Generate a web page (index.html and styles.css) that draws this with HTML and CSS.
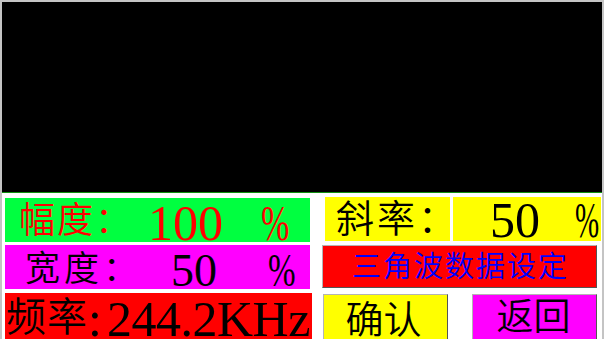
FILE: index.html
```html
<!DOCTYPE html>
<html lang="zh-CN">
<head>
<meta charset="utf-8">
<title>三角波数据设定</title>
<link rel="stylesheet" href="styles.css">
</head>
<body>
<div class="frame">
  <div class="screen"></div>
  <div class="panel">
    <div class="col-left">
      <div class="row amp">
        <span class="cjk lbl">幅度：</span>
        <span class="num val">100</span>
        <span class="num pct">%</span>
      </div>
      <div class="row wid">
        <span class="cjk lbl">宽度：</span>
        <span class="num val">50</span>
        <span class="num pct">%</span>
      </div>
      <div class="row freq">
        <span class="cjk lbl">频率</span>
        <span class="num colon">:</span>
        <span class="num val">244.2KHz</span>
      </div>
    </div>
    <div class="col-right">
      <div class="rrow">
        <div class="box slope-lbl"><span class="cjk lbl">斜率：</span></div>
        <div class="box slope-val">
          <span class="num val">50</span>
          <span class="num pct">%</span>
        </div>
      </div>
      <div class="btn title"><span class="cjk lbl">三角波数据设定</span></div>
      <div class="rrow bottom">
        <div class="btn ok"><span class="cjk lbl">确认</span></div>
        <div class="btn back"><span class="cjk lbl">返回</span></div>
      </div>
    </div>
  </div>
</div>
</body>
</html>
```
FILE: styles.css
```css
html, body {
  margin: 0;
  padding: 0;
  background: #ffffff;
}

.frame {
  box-sizing: border-box;
  width: 604px;
  height: 339px;
  border-top: 2px solid #c4c4c4;
  border-left: 2px solid #c4c4c4;
  border-right: 2px solid #c4c4c4;
  background: #ffffff;
}

.screen {
  height: 190px;
  background: #000000;
  border-bottom: 1px solid #119011;
}

.panel {
  display: flex;
  padding-top: 4px;
  padding-left: 3px;
}

.cjk {
  font-family: "Noto Sans CJK SC", sans-serif;
  font-weight: 350;
  line-height: 1;
  white-space: nowrap;
}

.num {
  font-family: "Liberation Serif", serif;
  line-height: 0.75;
  white-space: nowrap;
}

.pct {
  display: inline-block;
  transform-origin: left top;
}

/* left column */
.col-left {
  display: flex;
  flex-direction: column;
  width: 305px;
  margin-top: 1px;
}

.row {
  display: flex;
  align-items: flex-start;
  height: 44px;
}

.amp {
  background: #00ff40;
  color: #ff0000;
  padding-left: 14px;
}
.amp .lbl {
  font-size: 36px;
  letter-spacing: 2px;
  margin-top: 1px;
  width: 129px;
}
.amp .val {
  font-size: 50px;
  margin-top: 7px;
}
.amp .pct {
  font-size: 50px;
  margin-top: 7px;
  margin-left: 38px;
  margin-right: -14px;
  transform: scaleX(0.68);
}

.wid {
  background: #ff00ff;
  color: #000000;
  margin-top: 3px;
  padding-left: 20px;
}
.wid .lbl {
  font-size: 35px;
  letter-spacing: 4px;
  margin-top: 3px;
  width: 146px;
}
.wid .val {
  font-size: 46px;
  margin-top: 9px;
}
.wid .pct {
  font-size: 46px;
  margin-top: 9px;
  margin-left: 51px;
  margin-right: -11px;
  transform: scaleX(0.72);
}

.freq {
  background: #ff0000;
  color: #000000;
  margin-top: 4px;
  padding-left: 1px;
  width: 306px;
  height: 46px;
}
.freq .lbl {
  font-size: 40px;
  letter-spacing: 1px;
  margin-top: 1px;
  width: 82px;
}
.freq .colon {
  font-size: 50px;
  margin-top: 8px;
  width: 19px;
}
.freq .val {
  font-size: 50px;
  margin-top: 8px;
  letter-spacing: -0.5px;
}

/* right column */
.col-right {
  display: flex;
  flex-direction: column;
  width: 279px;
  margin-left: 12px;
}

.rrow {
  display: flex;
  align-items: flex-start;
  height: 44px;
  padding-left: 3px;
}

.box {
  display: flex;
  align-items: flex-start;
  height: 44px;
  background: #ffff00;
  color: #000000;
}

.slope-lbl {
  width: 125px;
  padding-left: 11px;
  box-sizing: border-box;
}
.slope-lbl .lbl {
  font-size: 38px;
  letter-spacing: 3px;
}

.slope-val {
  flex: 1;
  margin-left: 3px;
  padding-left: 37px;
}
.slope-val .val {
  font-size: 50px;
  margin-top: 5px;
}
.slope-val .pct {
  font-size: 50px;
  margin-top: 5px;
  margin-left: 35px;
  margin-right: -18px;
  transform: scaleX(0.58);
}

.btn {
  box-sizing: border-box;
  display: flex;
  justify-content: center;
  align-items: flex-start;
  border: 1px solid;
  border-color: #b4b4b4 #555555 #555555 #b4b4b4;
}

.title {
  width: 275px;
  height: 43px;
  margin-top: 4px;
  padding-top: 4px;
  padding-left: 2px;
  background: #ff0000;
  color: #0000ff;
}
.title .lbl {
  font-size: 29px;
  letter-spacing: 2px;
}

.bottom {
  margin-top: 6px;
  height: 45px;
  padding-left: 1px;
}

.ok {
  width: 125px;
  height: 45px;
  padding-top: 3px;
  padding-right: 4px;
  background: #ffff00;
  color: #000000;
  border-bottom: 0;
}
.ok .lbl {
  font-size: 38px;
}

.back {
  width: 125px;
  height: 45px;
  margin-left: 24px;
  padding-top: 1px;
  padding-right: 2px;
  background: #ff00ff;
  color: #000000;
  border-bottom: 0;
}
.back .lbl {
  font-size: 37px;
}
```
